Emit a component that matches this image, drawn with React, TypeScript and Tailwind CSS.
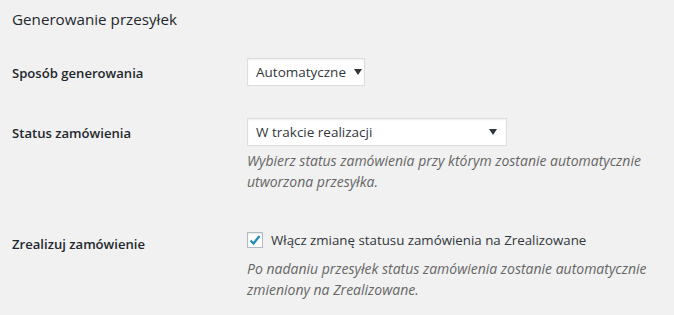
import React from "react";

const font = { fontFamily: '"Open Sans", "Noto Sans", sans-serif' };

function Caret() {
  return (
    <svg width="8" height="6" viewBox="0 0 8 6" className="shrink-0">
      <path d="M0 0 H8 L4 6 Z" fill="#32373c" />
    </svg>
  );
}

function Select({ value, width }: { value: string; width: string }) {
  return (
    <div
      className={`${width} flex h-[28px] items-center justify-between gap-[8px] border border-[#dddddd] bg-white pl-[8px] pr-[9px] text-[13.5px] text-[#32373c] shadow-[inset_0_1px_2px_rgba(0,0,0,0.07)]`}
    >
      <span className="whitespace-nowrap">{value}</span>
      <Caret />
    </div>
  );
}

function Description({ lines }: { lines: string[] }) {
  return (
    <p className="whitespace-nowrap text-[14px] italic leading-[21px] text-[#666666]">
      {lines.map((l, i) => (
        <span key={i} className="block">
          {l}
        </span>
      ))}
    </p>
  );
}

function Row({ label, children, className = "" }: { label: string; children: React.ReactNode; className?: string }) {
  return (
    <div className={`flex ${className}`}>
      <div className="w-[235px] shrink-0 pt-[5px] text-[13.1px] font-semibold leading-[20px] text-[#23282d]">{label}</div>
      <div className="min-w-0 flex-1">{children}</div>
    </div>
  );
}

export default function App() {
  return (
    <div className="h-[315px] w-[674px] overflow-hidden bg-[#f1f1f1] pl-[12px] pt-[7px] text-[#23282d]" style={font}>
      <h2 className="text-[15.2px] font-normal leading-[24px] text-[#23282d]">Generowanie przesyłek</h2>

      <Row label="Sposób generowania" className="mt-[27px]">
        <Select value="Automatyczne" width="w-[118px]" />
      </Row>

      <Row label="Status zamówienia" className="mt-[32px]">
        <Select value="W trakcie realizacji" width="w-[260px]" />
        <div className="mt-[4px]">
          <Description
            lines={[
              "Wybierz status zamówienia przy którym zostanie automatycznie",
              "utworzona przesyłka.",
            ]}
          />
        </div>
      </Row>

      <Row label="Zrealizuj zamówienie" className="mt-[37px]">
        <label className="flex items-center gap-[8px] pt-[1px] text-[13.3px] leading-[20px] text-[#32373c]">
          <span className="flex h-[16px] w-[16px] shrink-0 items-center justify-center border border-[#b4b9be] bg-white shadow-[inset_0_1px_2px_rgba(0,0,0,0.1)]">
            <svg width="14" height="14" viewBox="0 0 14 14">
              <path d="M2.5 7.5 L5.5 10.5 L11.5 3" fill="none" stroke="#1e8cbe" strokeWidth="2.2" />
            </svg>
          </span>
          Włącz zmianę statusu zamówienia na Zrealizowane
        </label>
        <div className="mt-[8px]">
          <Description
            lines={[
              "Po nadaniu przesyłek status zamówienia zostanie automatycznie",
              "zmieniony na Zrealizowane.",
            ]}
          />
        </div>
      </Row>
    </div>
  );
}
